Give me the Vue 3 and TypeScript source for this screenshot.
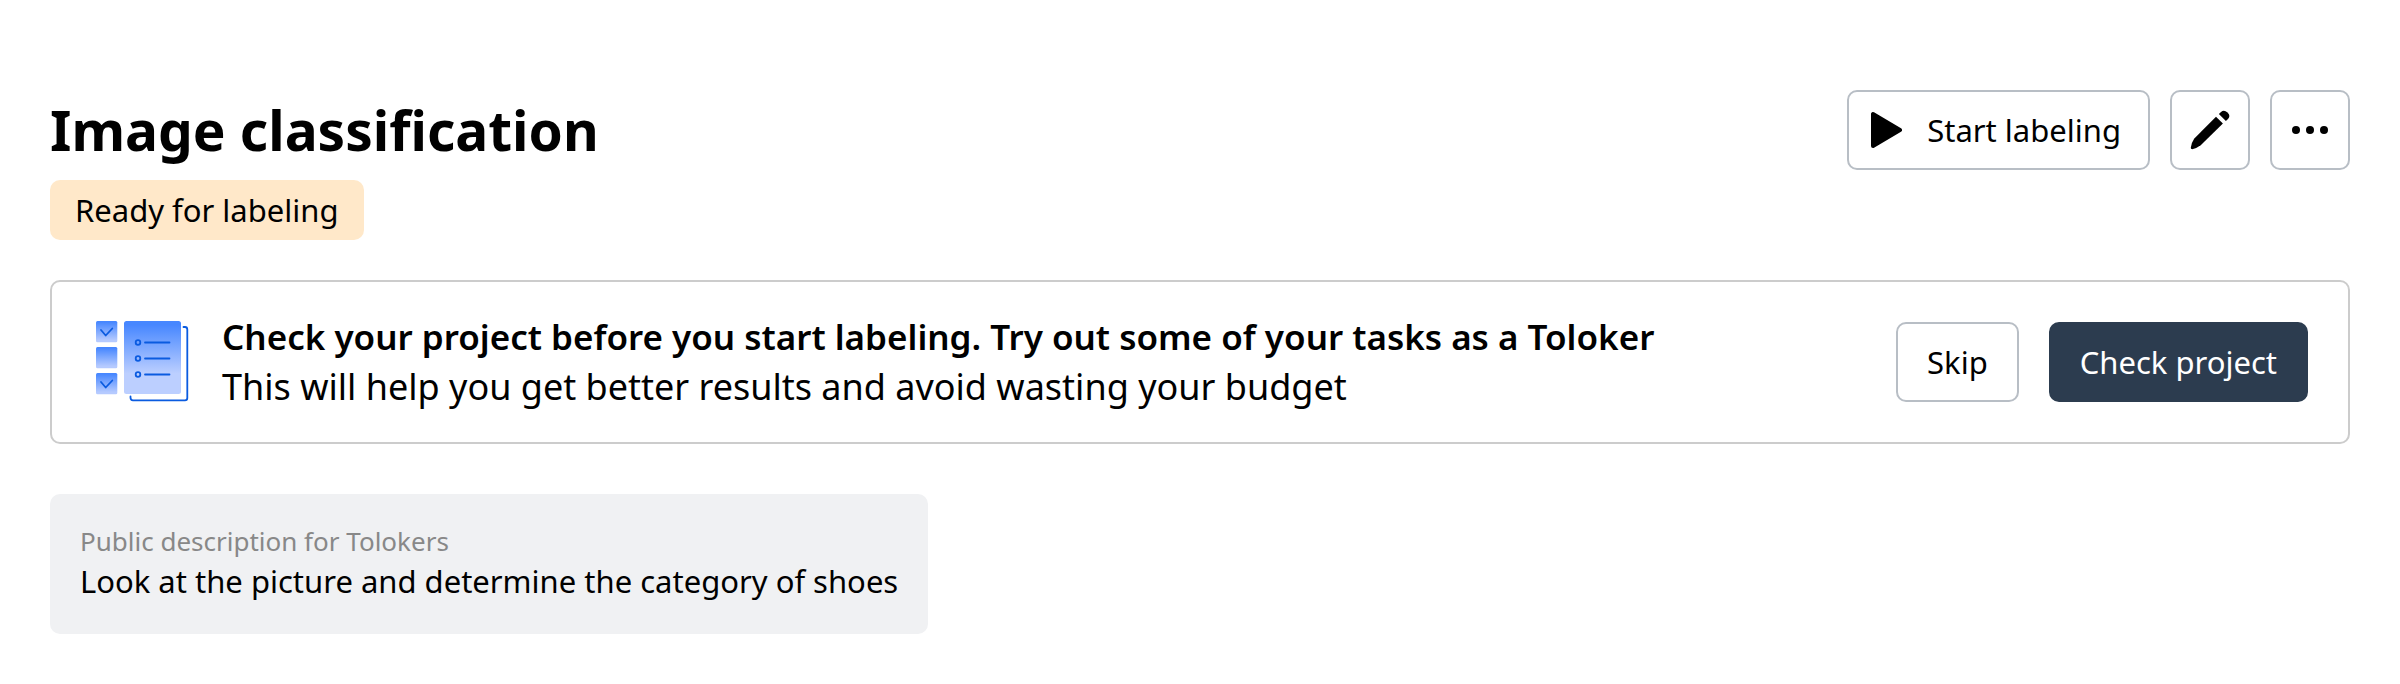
<script setup lang="ts">
const taskRows: number[] = [22, 38, 54]
const tickBoxes: { y: number; checked: boolean }[] = [
  { y: 1, checked: true },
  { y: 27, checked: false },
  { y: 53, checked: true },
]
</script>

<template>
  <main class="page">
    <header class="header">
      <h1 class="title">Image classification</h1>
      <div class="actions">
        <button type="button" class="button start">
          <svg class="play" viewBox="0 0 32 38" aria-hidden="true">
            <path d="M3 3V35L30 19Z" fill="#000" stroke="#000" stroke-width="4" stroke-linejoin="round" />
          </svg>
          Start labeling
        </button>
        <button type="button" class="button square" aria-label="Edit project">
          <svg class="icon" viewBox="0 0 40 40" aria-hidden="true">
            <path d="M26 6.7L32.9 13.4L10.700 35.300Q6.500 38.500 2.200 39.200Q.6 39.200 .8 37.600Q1.500 32.500 4.300 28.500Z" />
            <path d="M28.900 4L31 2Q34-.8 37.500 2.500Q41 6 38 9L35.900 11Z" />
          </svg>
        </button>
        <button type="button" class="button square" aria-label="More actions">
          <svg class="icon" viewBox="0 0 40 40" aria-hidden="true">
            <circle cx="6" cy="20" r="4" />
            <circle cx="20" cy="20" r="4" />
            <circle cx="34" cy="20" r="4" />
          </svg>
        </button>
      </div>
    </header>
    <span class="status">Ready for labeling</span>

    <section class="banner">
      <svg class="illustration" viewBox="0 0 94 84" aria-hidden="true">
        <defs>
          <linearGradient id="tile" x1="0" y1="0" x2="0" y2="1">
            <stop offset="0.050" stop-color="#4787ff" />
            <stop offset="0.900" stop-color="#b5caff" />
          </linearGradient>
          <linearGradient id="sheet" x1="0" y1="0" x2="0" y2="1">
            <stop offset="0.050" stop-color="#4787ff" />
            <stop offset="0.720" stop-color="#bccfff" />
          </linearGradient>
        </defs>
        <g v-for="box in tickBoxes" :key="box.y" :transform="`translate(1 ${box.y})`">
          <rect width="21.300" height="21.300" rx="1.500" fill="url(#tile)" />
          <path v-if="box.checked" class="line" d="M5 9L9.700 14.500L16.300 7.500" />
        </g>
        <rect x="29" y="1" width="57" height="73" rx="2.500" fill="url(#sheet)" />
        <g v-for="y in taskRows" :key="y" class="line">
          <circle cx="43" :cy="y + 0.500" r="2.300" />
          <path :d="`M50 ${y + 0.500}H74.500`" />
        </g>
        <path class="line" d="M88.500 7H90Q92.300 7 92.300 9.500V78Q92.300 80.300 90 80.300H38Q35.500 80.300 35.500 77.500V76.500" />
      </svg>
      <div class="message">
        <strong class="lead">Check your project before you start labeling. Try out some of your tasks as a Toloker</strong>
        <span>This will help you get better results and avoid wasting your budget</span>
      </div>
      <div class="choices">
        <button type="button" class="button">Skip</button>
        <button type="button" class="button primary">Check project</button>
      </div>
    </section>

    <section class="description">
      <h2 class="caption">Public description for Tolokers</h2>
      <p class="text">Look at the picture and determine the category of shoes</p>
    </section>
  </main>
</template>

<style>
body {
  margin: 0;
  background: #fff;
}
</style>

<style scoped>
.page {
  box-sizing: border-box;
  padding: 90px 50px 50px;
  color: #000;
  font-family: "Noto Sans", "Open Sans", sans-serif;
  font-size: 31px;
  line-height: 40px;
}

.header {
  display: flex;
  align-items: center;
  justify-content: space-between;
}

.title {
  margin: 0;
  font-size: 55px;
  font-weight: 700;
  line-height: 80px;
}

.actions {
  display: flex;
  gap: 20px;
}

.button {
  box-sizing: border-box;
  flex: none;
  height: 80px;
  padding: 0 29px;
  border: 2px solid #b8bec5;
  border-radius: 10px;
  background: #fff;
  color: #000;
  font: inherit;
  white-space: nowrap;
  cursor: pointer;
}

.start {
  display: flex;
  align-items: center;
  gap: 25px;
  padding: 0 27px 0 21px;
}

.square {
  display: flex;
  align-items: center;
  justify-content: center;
  width: 80px;
  padding: 0;
}

.play {
  width: 32px;
  height: 38px;
}

.icon {
  width: 40px;
  height: 40px;
}

.status {
  display: inline-block;
  margin-top: 10px;
  padding: 10px 25px;
  border-radius: 10px;
  background: #ffe8c9;
}

.banner {
  display: flex;
  align-items: center;
  gap: 33px;
  margin-top: 40px;
  padding: 30px 40px 30px 43px;
  border: 2px solid #ccc;
  border-radius: 10px;
}

.illustration {
  flex: none;
  width: 94px;
  height: 84px;
}

.line {
  fill: none;
  stroke: #0a5be0;
  stroke-width: 1.800;
  stroke-linecap: round;
  stroke-linejoin: round;
}

.message {
  display: flex;
  flex: 1;
  flex-direction: column;
  font-size: 36px;
  line-height: 50px;
}

.lead {
  font-size: 35px;
  font-weight: 600;
}

.choices {
  display: flex;
  flex: none;
  gap: 30px;
}

.primary {
  border-color: #2c3c4f;
  background: #2c3c4f;
  color: #fff;
}

.description {
  box-sizing: border-box;
  width: fit-content;
  margin-top: 50px;
  padding: 30px;
  border-radius: 10px;
  background: #f0f1f3;
}

.caption {
  margin: 0;
  color: #888;
  font-size: 26px;
  font-weight: 400;
  line-height: 34px;
}

.text {
  margin: 0;
  line-height: 46px;
}
</style>
